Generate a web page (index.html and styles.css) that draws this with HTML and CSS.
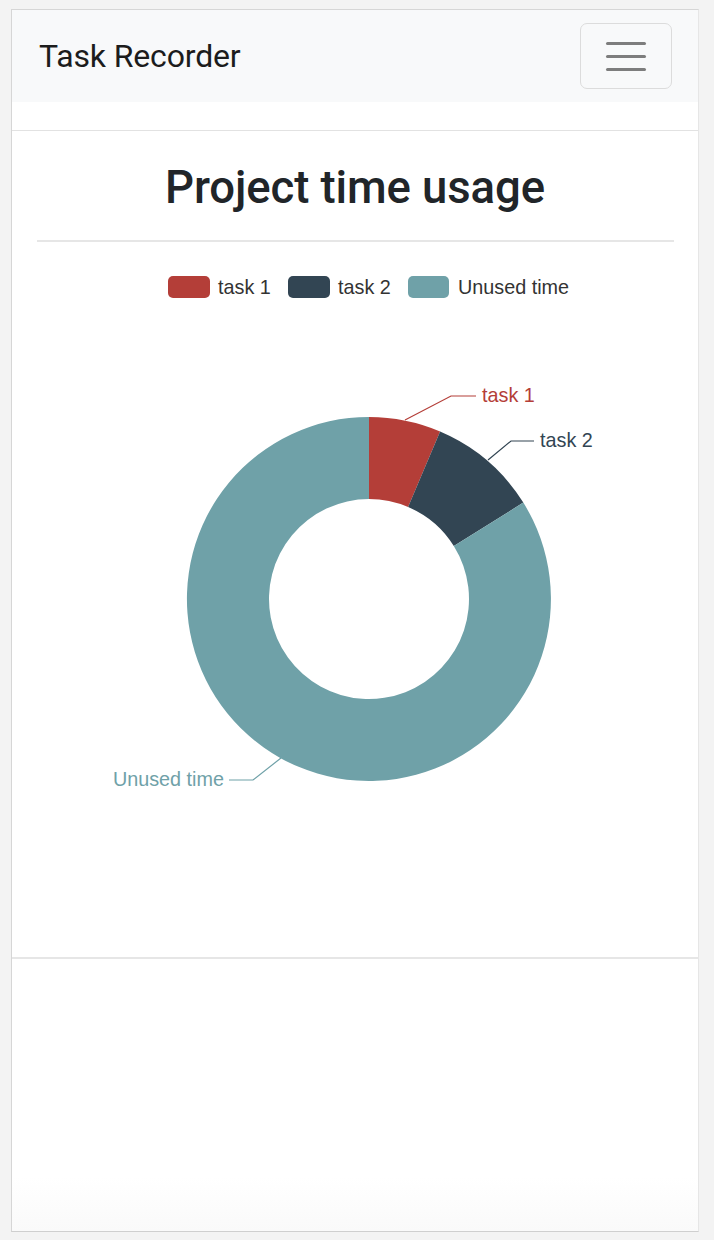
FILE: index.html
```html
<!DOCTYPE html>
<html lang="en">
<head>
<meta charset="utf-8">
<title>Task Recorder</title>
<link rel="stylesheet" href="styles.css">
</head>
<body>
<div class="window">
  <nav class="navbar">
    <span class="brand">Task Recorder</span>
    <button class="toggler" type="button" aria-label="Toggle navigation">
      <span class="bar"></span><span class="bar"></span><span class="bar"></span>
    </button>
  </nav>
  <div class="spacer"></div>
  <section class="card">
    <h1 class="title">Project time usage</h1>
    <hr class="rule">
    <svg class="chart" width="686" height="715" viewBox="12 242 686 715" xmlns="http://www.w3.org/2000/svg">
      <g class="legend">
        <rect x="168" y="276" width="42" height="22" rx="5" fill="#b43e38"/>
        <text x="218" y="294">task 1</text>
        <rect x="288" y="276" width="42" height="22" rx="5" fill="#324553"/>
        <text x="338" y="294">task 2</text>
        <rect x="408" y="276" width="41" height="22" rx="5" fill="#6fa1a8"/>
        <text x="458" y="294">Unused time</text>
      </g>
      <path d="M369,417 A182,182 0 0 1 440.1,431.5 L408.1,507 A100,100 0 0 0 369,499 Z" fill="#b43e38"/>
      <path d="M440.1,431.5 A182,182 0 0 1 523.3,502.6 L453.8,546 A100,100 0 0 0 408.1,507 Z" fill="#324553"/>
      <path d="M523.3,502.6 A182,182 0 1 1 369,417 L369,499 A100,100 0 1 0 453.8,546 Z" fill="#6fa1a8"/>
      <polyline points="405,420 451,396 476,396" fill="none" stroke="#b43e38" stroke-width="1.2"/>
      <text class="label" x="482" y="402" fill="#b43e38">task 1</text>
      <polyline points="488,460 511,441 534,441" fill="none" stroke="#324553" stroke-width="1.2"/>
      <text class="label" x="540" y="447" fill="#324553">task 2</text>
      <polyline points="281,758 253,780 229,780" fill="none" stroke="#6fa1a8" stroke-width="1.2"/>
      <text class="label" x="224" y="786" fill="#6fa1a8" text-anchor="end">Unused time</text>
    </svg>
  </section>
  <div class="footer"></div>
</div>
</body>
</html>
```

FILE: styles.css
```css
html, body {
  margin: 0;
  padding: 0;
}
body {
  background: #f3f3f3;
  padding: 9px 15px 8px 11px;
  font-family: Roboto, "Liberation Sans", Arial, sans-serif;
  color: #212529;
}
.window {
  box-sizing: border-box;
  width: 688px;
  height: 1223px;
  background: #fff;
  border: 1px solid #d6d6d6;
  border-right-color: #e6e6e6;
  border-bottom-color: #cfcfcf;
  display: flex;
  flex-direction: column;
}
.navbar {
  height: 92px;
  background: #f8f9fa;
  display: flex;
  align-items: center;
  justify-content: space-between;
  padding: 0 26px 0 27px;
  flex-shrink: 0;
}
.brand {
  font-size: 32px;
  font-weight: 400;
  color: #1c1c1c;
  letter-spacing: -0.15px;
}
.toggler {
  box-sizing: border-box;
  width: 92px;
  height: 66px;
  background: transparent;
  border: 1.5px solid #dcdcdc;
  border-radius: 7px;
  padding: 0;
  display: flex;
  flex-direction: column;
  align-items: center;
  justify-content: center;
  gap: 10px;
}
.bar {
  display: block;
  width: 40px;
  height: 3px;
  border-radius: 2px;
  background: #7d7d7d;
}
.spacer {
  height: 28px;
  flex-shrink: 0;
}
.card {
  border-top: 1.5px solid #e2e2e2;
  padding-top: 29px;
  flex-shrink: 0;
}
.title {
  margin: 0;
  text-align: center;
  font-size: 45.5px;
  font-weight: 500;
  line-height: 55px;
  letter-spacing: -0.1px;
  color: #212529;
}
.rule {
  margin: 25px 24px 0 25px;
  border: 0;
  border-top: 2px solid #e6e6e6;
  height: 0;
}
.chart {
  display: block;
}
.legend text {
  font-family: "Liberation Sans", Arial, sans-serif;
  font-size: 19.8px;
  fill: #333;
}
.label {
  font-family: "Liberation Sans", Arial, sans-serif;
  font-size: 19.8px;
}
.footer {
  flex: 1;
  border-top: 2px solid #e6e6e6;
  background: linear-gradient(to bottom, #fff 80%, #fafafa 100%);
}
```
